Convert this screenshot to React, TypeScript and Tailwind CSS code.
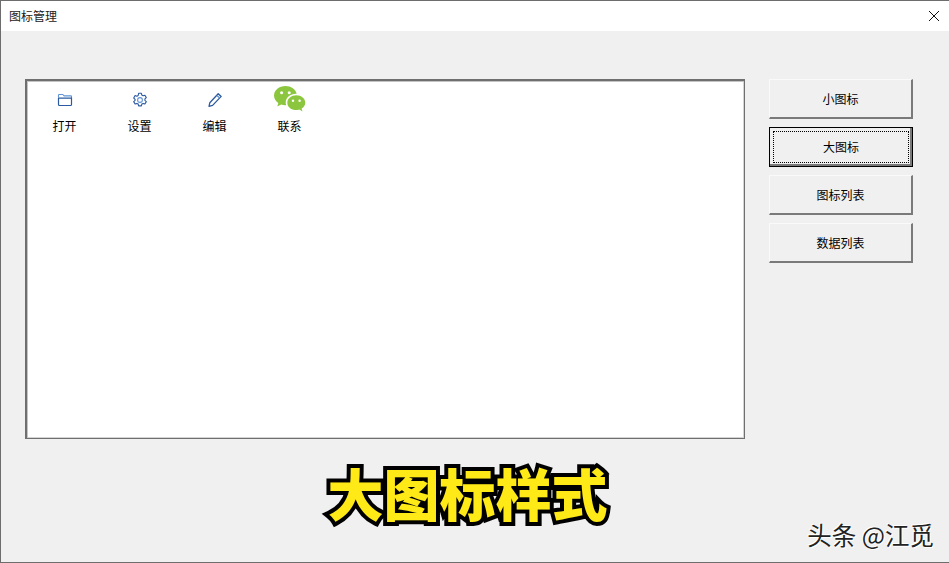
const cjk = "font-['Noto_Sans_CJK_SC','Liberation_Sans',sans-serif]";

const FolderIcon = () => (
  <svg width="16" height="16" viewBox="0 0 16 16" fill="none" strokeLinejoin="round">
    <path d="M1.500 5.500V3.200c0-.4.3-.7.7-.7h3.600l1.300 1.400h6.700c.4 0 .7.3.7.7V7" stroke="#5f93d6" strokeWidth="1.100" />
    <path d="M1.500 6.200h13v6.300c0 .6-.4 1-1 1h-11c-.6 0-1-.4-1-1z" stroke="#2b5aa0" strokeWidth="1.200" />
  </svg>
);

const GearIcon = () => (
  <svg width="16" height="16" viewBox="0 0 16 16" fill="none" stroke="#2b5aa0" strokeWidth="1.100" strokeLinejoin="round">
    <path d="M6.600 1.300h2.800l.4 1.800 1.300.7 1.800-.6 1.400 2.400-1.400 1.300v1.400l1.400 1.300-1.400 2.400-1.800-.6-1.300.7-.4 1.800H6.600l-.4-1.800-1.300-.7-1.800.6-1.400-2.400 1.400-1.300V7.300L1.700 6l1.400-2.400 1.800.6 1.300-.7z" />
    <circle cx="8" cy="8" r="2.400" stroke="#5f93d6" />
  </svg>
);

const PencilIcon = () => (
  <svg width="16" height="16" viewBox="0 0 16 16" fill="none" stroke="#2b5aa0" strokeWidth="1.300" strokeLinejoin="round">
    <path d="M11.200 1.800l3 2.600-8.600 9-3.600 1 .8-3.600z" />
    <path d="M9.800 3.400l3 2.600" stroke="#5f93d6" />
  </svg>
);

const WechatIcon = () => (
  <svg width="32" height="28" viewBox="0 0 32 28">
    <path fill="#8cc63f" d="M11.500 0C5.200 0 0 4.200 0 9.600c0 3 1.700 5.600 4.300 7.400L3.300 20.500l3.900-2c1.200.4 2.600.7 4 .7h1c-.3-.9-.5-1.800-.5-2.700 0-5 4.700-8.800 10.300-8.800h.7C21.500 3.200 17 0 11.500 0z" />
    <path fill="#8cc63f" d="M22.300 9.300c-5 0-9 3.300-9 7.400s4 7.400 9 7.400c1 0 2-.1 3-.5l3.200 1.900-.9-3c2.200-1.400 3.700-3.500 3.700-5.800 0-4.100-4-7.400-9-7.400z" />
    <circle cx="7.600" cy="6.800" r="1.500" fill="#fff" />
    <circle cx="15.200" cy="6.800" r="1.500" fill="#fff" />
    <circle cx="19" cy="14.800" r="1.200" fill="#fff" />
    <circle cx="25.600" cy="14.800" r="1.200" fill="#fff" />
  </svg>
);

const items = [
  { label: "打开", icon: <FolderIcon /> },
  { label: "设置", icon: <GearIcon /> },
  { label: "编辑", icon: <PencilIcon /> },
  { label: "联系", icon: <WechatIcon /> },
];

const buttons = ["小图标", "大图标", "图标列表", "数据列表"];

const WinButton = ({ label, active }: { label: string; active: boolean }) => {
  if (active) {
    return (
      <button className="h-10 w-36 border border-black bg-[#f0f0f0] p-[3px] text-xs text-black shadow-[inset_-2px_-2px_0_#7a7a7a]">
        <span className="flex h-full w-full items-center justify-center border border-dotted border-black">
          {label}
        </span>
      </button>
    );
  }
  return (
    <button className="h-10 w-36 border-t border-l border-r-2 border-b-2 border-t-[#fafafa] border-l-[#fafafa] border-r-[#7a7a7a] border-b-[#7a7a7a] bg-[#f0f0f0] text-xs text-black">
      {label}
    </button>
  );
};

export default function App() {
  return (
    <div className={`relative flex h-[563px] w-[949px] flex-col overflow-hidden border border-[#6d6d6d] border-r-0 bg-[#f0f0f0] ${cjk}`}>
      <div className="flex h-[30px] shrink-0 items-center justify-between bg-white pl-2 pr-[9px]">
        <span className="text-xs text-[#222]">图标管理</span>
        <svg width="12" height="12" viewBox="0 0 12 12" stroke="#111" strokeWidth="1">
          <path d="M1 1l10 10M11 1L1 11" />
        </svg>
      </div>

      <div className="flex items-start pl-6 pt-12">
        <div className="h-[360px] w-[720px] border-t-2 border-l-2 border-r border-b border-[#6f6f6f] bg-white shadow-[inset_1px_1px_0_#c4c4c4,inset_-1px_-1px_0_#d4d4d4]">
          <div className="flex pt-[5px]">
            {items.map((item) => (
              <div key={item.label} className="flex w-[75px] flex-col items-center">
                <div className="flex h-[28px] w-full items-center justify-center">{item.icon}</div>
                <span className="mt-[4px] text-xs leading-[16px] text-black">{item.label}</span>
              </div>
            ))}
          </div>
        </div>
        <div className="ml-6 flex flex-col gap-2">
          {buttons.map((b, i) => (
            <WinButton key={b} label={b} active={i === 1} />
          ))}
        </div>
      </div>

      <div className="mt-[13px] flex justify-center">
        <span className="ml-[-15px] text-[56px] leading-[80px] font-black text-[#ffea17] [-webkit-text-stroke:8px_#000] [paint-order:stroke_fill]">
          大图标样式
        </span>
      </div>

      <span className="absolute right-[15px] bottom-[12px] text-[24.500px] leading-[30px] text-[#222] [text-shadow:1px_1px_0_#fff,-1px_-1px_0_#fff]">
        头条 @江觅
      </span>
    </div>
  );
}
